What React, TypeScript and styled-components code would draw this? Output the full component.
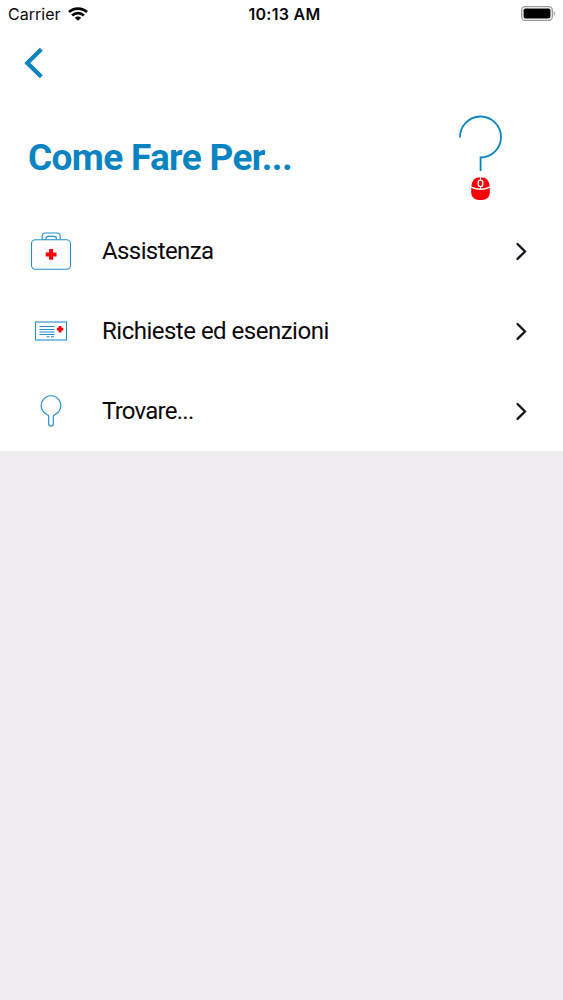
import React from 'react';
import styled, { createGlobalStyle } from 'styled-components';

const blue = '#0a84c1';

const GlobalStyle = createGlobalStyle`
  *, *::before, *::after { box-sizing: border-box; }
  body { margin: 0; background: #eeecef; }
  svg { display: block; flex: none; }
`;

const Screen = styled.main`
  display: flex;
  flex-direction: column;
  min-height: 1000px;
  background: #eeecef;
  color: #0c090d;
  font-family: Roboto, sans-serif;
`;

const Panel = styled.div`
  height: 451px;
  background: #fefefe;
`;

const StatusBar = styled.header`
  display: grid;
  grid-template-columns: 1fr auto 1fr;
  align-items: center;
  height: 28px;
  padding: 0 7px 0 8px;
  font-family: Inter, sans-serif;
  font-size: 16px;
`;

const Carrier = styled.div`
  display: flex;
  align-items: center;
  gap: 7px;
  letter-spacing: 0.02px;
`;

const Clock = styled.div`
  font-weight: 600;
  letter-spacing: 0.3px;
  padding-left: 5px;
`;

const Battery = styled.div`
  display: flex;
  justify-content: flex-end;
`;

const NavBar = styled.nav`
  display: flex;
  align-items: center;
  height: 70px;
  padding-left: 24px;
`;

const BackButton = styled.button`
  padding: 0;
  border: 0;
  background: none;
`;

const Hero = styled.section`
  display: flex;
  align-items: center;
  justify-content: space-between;
  height: 113px;
  padding: 6px 56px 0 28px;
`;

const Title = styled.h1`
  margin: 0;
  color: ${blue};
  font-size: 37px;
  line-height: 44px;
  font-weight: 700;
  letter-spacing: -0.67px;
  white-space: nowrap;
`;

const List = styled.ul`
  margin: 0;
  padding: 0;
  list-style: none;
`;

const Row = styled.li`
  display: grid;
  grid-template-columns: 46px 1fr 14px;
  column-gap: 28px;
  align-items: center;
  height: 80px;
  padding: 0 35px 0 28px;
`;

const IconSlot = styled.div`
  display: flex;
  justify-content: center;
`;

const Label = styled.span<{ $spacing: number }>`
  font-size: 24px;
  line-height: 32px;
  letter-spacing: ${({ $spacing }) => $spacing}px;
`;

const WifiIcon = () => (
  <svg width="20" height="14" viewBox="0 0 20 14" fill="none" stroke="#000" strokeWidth="2.8">
    <path d="M1 5C6 .4 14 .4 19 5" />
    <path d="M4.1 8.5C7.5 5.3 12.5 5.3 15.9 8.5" />
    <path d="M6.8 10.7C8.6 9 11.4 9 13.2 10.7L10 13.8Z" fill="#000" stroke="none" />
  </svg>
);

const BatteryIcon = () => (
  <svg width="35" height="16" viewBox="0 0 35 16">
    <rect x=".7" y=".7" width="30.6" height="13.6" rx="3.5" fill="none" stroke="#999" strokeWidth="1.3" />
    <rect x="2.6" y="2.5" width="26.8" height="10" rx="1.8" />
    <path d="M32.7 5.2c2 .7 2 4 0 4.7Z" fill="#aaa" />
  </svg>
);

const BackIcon = () => (
  <svg width="20" height="32" viewBox="0 0 20 32" fill="none" stroke={blue} strokeWidth="4.2">
    <path d="M17.3 2.2L3.3 16l14 13.8" />
  </svg>
);

const QuestionIcon = () => (
  <svg width="50" height="90" viewBox="0 0 50 90">
    <path d="M3 24.5A20.5 20.5 0 1 1 23.6 44.5V58" fill="none" stroke={blue} strokeWidth="1.8" />
    <path d="M14.4 73.5C14.6 67.5 18 64.3 23.5 64.3S32.4 67.5 32.6 73.5Q23.5 77.5 14.4 73.5Z" fill="#fb0007" />
    <path d="M14.2 75Q23.5 78.9 32.8 75V79C32.8 84.5 29.5 87 23.5 87S14.2 84.5 14.2 79Z" fill="#fb0007" />
    <path d="M23.5 64v12.5" stroke="#fff" strokeWidth="1" />
    <rect x="21.2" y="67.2" width="4.6" height="6.4" rx="2.3" fill="#fb0007" stroke="#fff" strokeWidth="1.3" />
  </svg>
);

const KitIcon = () => (
  <svg width="42" height="40" viewBox="0 0 42 40" fill="none" stroke="#2190c9" strokeWidth="1.1">
    <rect x="1.5" y="8.7" width="39" height="29.5" rx="4" />
    <path d="M12.2 8.7V5.2Q12.2 2 15.4 2H27Q30.2 2 30.2 5.2V8.7M16 8.7V7.6Q16 5.4 18.2 5.4h6q2.2 0 2.2 2.2V8.7" />
    <path d="M15.7 23.4h10.8M21.1 18v10.8" stroke="#fb0007" strokeWidth="4" />
  </svg>
);

const CardIcon = () => (
  <svg width="34" height="20" viewBox="0 0 34 20" fill="none" stroke="#2190c9" strokeWidth="1.1">
    <rect x="1.5" y="1" width="31" height="18" />
    <path d="M5.5 5.5h15M5.5 8.5h15M5.5 11h15M5.5 13.5h15M12.5 15.8h3M17 15.8h3" />
    <path d="M22.9 8.2h6.4M26.1 5v6.4" stroke="#fb0007" strokeWidth="2.8" />
  </svg>
);

const SearchIcon = () => (
  <svg width="22" height="34" viewBox="0 0 22 34" fill="none" stroke="#2190c9" strokeWidth="1.2">
    <path d="M8.7 30V22.6Q8.7 21.2 7 20.5A9.8 9.8 0 1 1 15 20.5Q13.3 21.2 13.3 22.6V30Q13.3 32.2 11 32.2T8.7 30Z" />
  </svg>
);

const ChevronIcon = () => (
  <svg width="14" height="20" viewBox="0 0 14 20" fill="none" stroke="#17151a" strokeWidth="2.3">
    <path d="M3.5 3L11 10.5l-7.5 7.4" strokeLinecap="round" />
  </svg>
);

const items = [
  { label: 'Assistenza', Icon: KitIcon, spacing: -0.6 },
  { label: 'Richieste ed esenzioni', Icon: CardIcon, spacing: -0.5 },
  { label: 'Trovare...', Icon: SearchIcon, spacing: -0.75 },
];

export default function App() {
  return (
    <Screen>
      <GlobalStyle />
      <Panel>
        <StatusBar>
          <Carrier>Carrier<WifiIcon /></Carrier>
          <Clock>10:13 AM</Clock>
          <Battery><BatteryIcon /></Battery>
        </StatusBar>
        <NavBar>
          <BackButton aria-label="Indietro"><BackIcon /></BackButton>
        </NavBar>
        <Hero>
          <Title>Come Fare Per...</Title>
          <QuestionIcon />
        </Hero>
        <List>
          {items.map(({ label, Icon, spacing }) => (
            <Row key={label}>
              <IconSlot><Icon /></IconSlot>
              <Label $spacing={spacing}>{label}</Label>
              <ChevronIcon />
            </Row>
          ))}
        </List>
      </Panel>
    </Screen>
  );
}
